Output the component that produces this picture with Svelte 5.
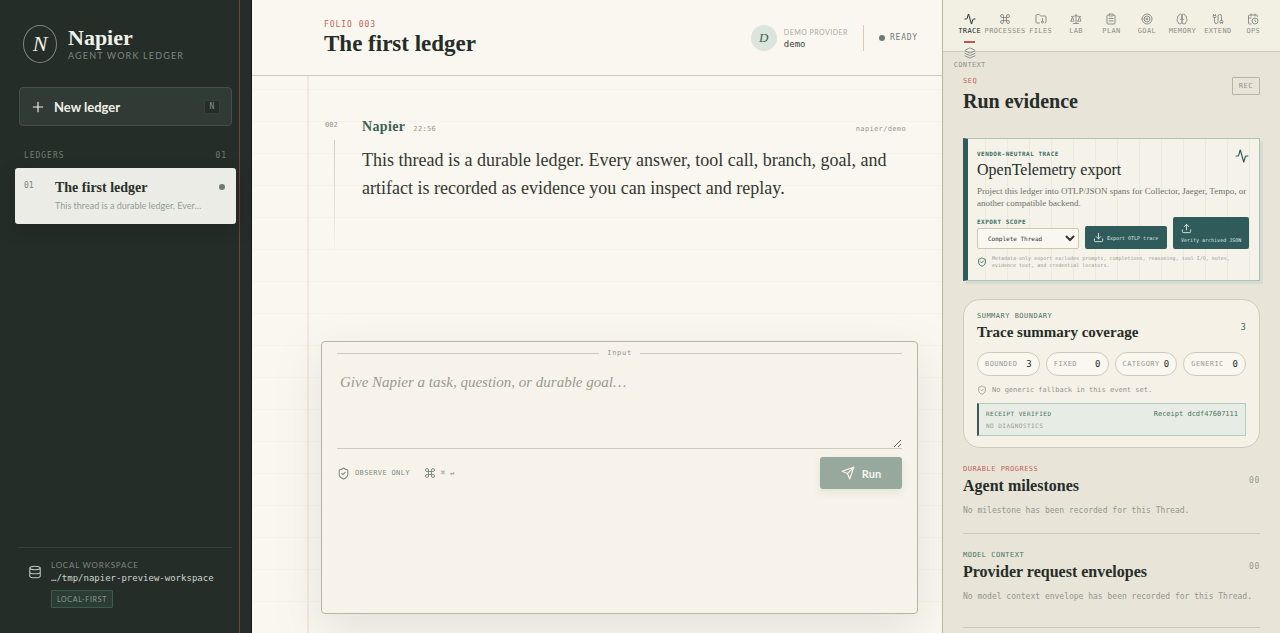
<script>
    const icons = {
        activity: 'M22 12h-2.48a2 2 0 0 0-1.93 1.46l-2.35 8.36a.25.25 0 0 1-.48 0L9.24 2.18a.25.25 0 0 0-.48 0l-2.35 8.36A2 2 0 0 1 4.49 12H2',
        command: 'M15 6v12a3 3 0 1 0 3-3H6a3 3 0 1 0 3 3V6a3 3 0 1 0-3 3h12a3 3 0 1 0-3-3',
        folder: 'M9 20H4a2 2 0 0 1-2-2V5a2 2 0 0 1 2-2h3.9a2 2 0 0 1 1.69.9l.81 1.2a2 2 0 0 0 1.67.9H20a2 2 0 0 1 2 2v10a2 2 0 0 1-2 2M15 11v5M13 18a2 2 0 1 0 4 0a2 2 0 1 0-4 0',
        scale: 'm16 16 3-8 3 8c-.87.65-1.92 1-3 1s-2.13-.35-3-1ZM2 16l3-8 3 8c-.87.65-1.92 1-3 1s-2.13-.35-3-1ZM7 21h10M12 3v18M3 7h2c2 0 5-1 7-2 2 1 5 2 7 2h2',
        clipboard: 'M9 2h6a1 1 0 0 1 1 1v2a1 1 0 0 1-1 1H9a1 1 0 0 1-1-1V3a1 1 0 0 1 1-1ZM16 4h2a2 2 0 0 1 2 2v14a2 2 0 0 1-2 2H6a2 2 0 0 1-2-2V6a2 2 0 0 1 2-2h2M8 11h8M8 16h8',
        target: 'M2 12a10 10 0 1 0 20 0a10 10 0 1 0-20 0M6 12a6 6 0 1 0 12 0a6 6 0 1 0-12 0M10 12a2 2 0 1 0 4 0a2 2 0 1 0-4 0',
        brain: 'M12 5a3 3 0 1 0-5.997.125 4 4 0 0 0-2.526 5.77 4 4 0 0 0 .556 6.588A4 4 0 1 0 12 18ZM12 5a3 3 0 1 1 5.997.125 4 4 0 0 1 2.526 5.77 4 4 0 0 1-.556 6.588A4 4 0 1 1 12 18ZM15 13a4.5 4.5 0 0 1-3-4 4.5 4.5 0 0 1-3 4',
        cable: 'M17 21v-2a1 1 0 0 1-1-1v-1a2 2 0 0 1 2-2h2a2 2 0 0 1 2 2v1a1 1 0 0 1-1 1v2M19 15V6.5a1 1 0 0 0-7 0v11a1 1 0 0 1-7 0V9M21 19h-4M3 5h4V3M7 5a1 1 0 0 1 1 1v1a2 2 0 0 1-2 2H4a2 2 0 0 1-2-2V6a1 1 0 0 1 1-1V3',
        calendar: 'M21 7.5V6a2 2 0 0 0-2-2H5a2 2 0 0 0-2 2v14a2 2 0 0 0 2 2h3.5M16 2v4M8 2v4M3 10h5M17.5 17.5 16 16.3V14M10 16a6 6 0 1 0 12 0a6 6 0 1 0-12 0',
        layers: 'M12.83 2.18a2 2 0 0 0-1.66 0L2.6 6.08a1 1 0 0 0 0 1.83l8.58 3.91a2 2 0 0 0 1.66 0l8.58-3.9a1 1 0 0 0 0-1.83ZM22 12.65l-9.17 4.16a2 2 0 0 1-1.66 0L2 12.65M22 17.65l-9.17 4.16a2 2 0 0 1-1.66 0L2 17.65',
        shield: 'M20 13c0 5-3.5 7.5-7.66 8.95a1 1 0 0 1-.67-.01C7.5 20.5 4 18 4 13V6a1 1 0 0 1 1-1c2 0 4.5-1.2 6.24-2.72a1.17 1.17 0 0 1 1.52 0C14.51 3.81 17 5 19 5a1 1 0 0 1 1 1ZM9 12l2 2 4-4',
        send: 'm22 2-7 20-4-9-9-4ZM22 2 11 13',
        database: 'M3 5a9 3 0 1 0 18 0a9 3 0 1 0-18 0M3 5v14a9 3 0 0 0 18 0V5M3 12a9 3 0 0 0 18 0',
        download: 'M21 15v4a2 2 0 0 1-2 2H5a2 2 0 0 1-2-2v-4M7 10l5 5 5-5M12 15V3',
        upload: 'M21 15v4a2 2 0 0 1-2 2H5a2 2 0 0 1-2-2v-4M17 8l-5-5-5 5M12 3v12',
        plus: 'M4 12h16M12 4v16'
    };

    const tabs = [
        ['Trace', 'activity'],
        ['Processes', 'command'],
        ['Files', 'folder'],
        ['Lab', 'scale'],
        ['Plan', 'clipboard'],
        ['Goal', 'target'],
        ['Memory', 'brain'],
        ['Extend', 'cable'],
        ['Ops', 'calendar'],
        ['Context', 'layers']
    ];

    const counts = [
        ['Bounded', 3],
        ['Fixed', 0],
        ['Category', 0],
        ['Generic', 0]
    ];

    const empties = [
        { kicker: 'Durable progress', title: 'Agent milestones', text: 'No milestone has been recorded for this Thread.', warm: true },
        { kicker: 'Model context', title: 'Provider request envelopes', text: 'No model context envelope has been recorded for this Thread.', warm: false }
    ];

    let current = $state('Trace');
    let task = $state('');
</script>

{#snippet icon(name, size, weight = 2)}
    <svg width={size} height={size} viewBox="0 0 24 24" fill="none" stroke="currentColor" stroke-width={weight} stroke-linecap="round" stroke-linejoin="round" aria-hidden="true">
        <path d={icons[name]} />
    </svg>
{/snippet}

<div class="shell">
    <nav class="sidebar">
        <div class="brand">
            <span class="mark">N</span>
            <div class="brand-text">
                <div class="brand-name">Napier</div>
                <div class="brand-sub">AGENT WORK LEDGER</div>
            </div>
        </div>
        <button class="new-ledger">
            {@render icon('plus', 14, 2)}
            <span>New ledger</span>
            <kbd>N</kbd>
        </button>
        <div class="list-head mono"><span>LEDGERS</span><span>01</span></div>
        <button class="ledger">
            <span class="num mono">01</span>
            <span class="ledger-text">
                <strong>The first ledger</strong>
                <small>This thread is a durable ledger. Ever…</small>
            </span>
            <i class="dot"></i>
        </button>
        <div class="workspace">
            {@render icon('database', 14, 1.8)}
            <div>
                <div class="ws-label">LOCAL WORKSPACE</div>
                <div class="ws-path mono">…/tmp/napier-preview-workspace</div>
                <span class="badge">LOCAL-FIRST</span>
            </div>
        </div>
    </nav>

    <main>
        <header>
            <div class="title">
                <div class="folio mono">FOLIO 003</div>
                <h1>The first ledger</h1>
            </div>
            <div class="status">
                <span class="avatar">D</span>
                <div class="provider">
                    <div class="provider-label">DEMO PROVIDER</div>
                    <div class="provider-name mono">demo</div>
                </div>
                <div class="ready mono"><i class="dot"></i>READY</div>
            </div>
        </header>

        <div class="paper">
            <article>
                <div class="rail mono">002</div>
                <div class="message">
                    <div class="meta">
                        <strong>Napier</strong>
                        <time class="mono">22:56</time>
                        <span class="model mono">napier/demo</span>
                    </div>
                    <p>This thread is a durable ledger. Every answer, tool call, branch, goal, and artifact is recorded as evidence you can inspect and replay.</p>
                </div>
            </article>

            <form class="composer" onsubmit={(e) => e.preventDefault()}>
                <label class="rule mono" for="task">Input</label>
                <textarea id="task" bind:value={task} placeholder="Give Napier a task, question, or durable goal…"></textarea>
                <div class="composer-foot">
                    <span class="hint mono">{@render icon('shield', 13, 2)}OBSERVE ONLY</span>
                    <span class="hint mono">{@render icon('command', 12, 2)}⌘ ↵</span>
                    <button class="run" disabled={!task}>{@render icon('send', 14, 2)}Run</button>
                </div>
            </form>
        </div>
    </main>

    <aside>
        <nav class="tabs">
            {#each tabs as [name, glyph]}
                <button class="tab mono" class:active={current === name} onclick={() => (current = name)}>
                    {@render icon(glyph, 12)}
                    <span>{name}</span>
                </button>
            {/each}
        </nav>

        <div class="evidence">
            <div class="evidence-head">
                <div>
                    <div class="kicker mono warm">SEQ</div>
                    <h2>Run evidence</h2>
                </div>
                <span class="rec mono">REC</span>
            </div>

            <section class="export">
                <div class="export-top">
                    <div class="tiny mono">VENDOR-NEUTRAL TRACE</div>
                    {@render icon('activity', 14)}
                </div>
                <h3>OpenTelemetry export</h3>
                <p>Project this ledger into OTLP/JSON spans for Collector, Jaeger, Tempo, or another compatible backend.</p>
                <div class="export-row">
                    <div class="scope">
                        <label class="tiny mono" for="scope">EXPORT SCOPE</label>
                        <select id="scope" class="mono">
                            <option>Complete Thread</option>
                        </select>
                    </div>
                    <button class="solid mono">{@render icon('download', 11)}Export OTLP trace</button>
                    <button class="solid tall mono">{@render icon('upload', 11)}Verify archived JSON</button>
                </div>
                <div class="note mono">
                    {@render icon('shield', 10)}
                    <span>Metadata-only export excludes prompts, completions, reasoning, tool I/O, notes, evidence text, and credential locators.</span>
                </div>
            </section>

            <section class="coverage">
                <div class="section-head">
                    <div>
                        <div class="kicker mono">SUMMARY BOUNDARY</div>
                        <h3>Trace summary coverage</h3>
                    </div>
                    <span class="total mono">3</span>
                </div>
                <div class="pills">
                    {#each counts as [label, n]}
                        <div class="pill mono"><span>{label}</span><b>{n}</b></div>
                    {/each}
                </div>
                <div class="fallback mono">{@render icon('shield', 10)}No generic fallback in this event set.</div>
                <div class="receipt mono">
                    <div><span class="verified">RECEIPT VERIFIED</span><span class="hash">Receipt dcdf47607111</span></div>
                    <div>NO DIAGNOSTICS</div>
                </div>
            </section>

            {#each empties as item}
                <section class="empty">
                    <div class="section-head">
                        <div>
                            <div class="kicker mono" class:warm={item.warm}>{item.kicker}</div>
                            <h3>{item.title}</h3>
                        </div>
                        <span class="count mono">00</span>
                    </div>
                    <p class="mono">{item.text}</p>
                </section>
            {/each}
        </div>
    </aside>
</div>

<style>
    :global(body) {
        margin: 0;
        background: #faf7f0;
    }

    .shell {
        --serif: "Liberation Serif", serif;
        --sans: Lato, sans-serif;
        display: grid;
        grid-template-columns: 252px minmax(0, 1fr) 338px;
        grid-template-rows: minmax(0, 1fr);
        height: 100vh;
        overflow: hidden;
        font-family: var(--sans);
        color: #252d28;
    }

    .shell * {
        box-sizing: border-box;
    }

    .mono {
        font-family: "DejaVu Sans Mono", monospace;
    }

    button {
        font-family: var(--sans);
        border: 0;
        padding: 0;
        background: none;
        color: inherit;
        cursor: pointer;
    }

    h1, h2, h3, p {
        margin: 0;
        font-family: var(--serif);
    }

    svg {
        display: block;
        flex: none;
    }

    .dot {
        flex: none;
        width: 6px;
        height: 6px;
        border-radius: 50%;
        background: #6c7c73;
    }

    /* sidebar */
    .sidebar {
        display: flex;
        flex-direction: column;
        padding: 25px 19px;
        border-right: 1px solid #101a1c;
        background: linear-gradient(90deg, transparent 239px, #74403a 239px, #74403a 240px, transparent 240px), #252d28;
    }

    .brand {
        display: flex;
        align-items: center;
        gap: 11px;
        padding-left: 4px;
    }

    .brand-text {
        padding-top: 2px;
    }

    .mark {
        width: 34px;
        height: 38px;
        border: 1px solid #7d857e;
        border-radius: 50%;
        color: #f2efe4;
        font: italic 22px/36px var(--serif);
        text-align: center;
    }

    .brand-name {
        font: bold 22px/22px var(--serif);
        color: #f0f1e9;
    }

    .brand-sub {
        font-size: 9px;
        line-height: 14px;
        letter-spacing: 0.13em;
        color: #7c8780;
    }

    .new-ledger {
        display: flex;
        align-items: center;
        gap: 9px;
        height: 39px;
        margin-top: 24px;
        padding: 0 11px;
        border: 1px solid #435049;
        border-radius: 4px;
        background: #313b35;
        color: #f2f1e8;
        font-size: 13px;
        font-weight: bold;
    }

    kbd {
        margin-left: auto;
        width: 16px;
        border: 1px solid #38423c;
        border-radius: 3px;
        background: #252d28;
        color: #88918a;
        font: 8px/12px "DejaVu Sans Mono", monospace;
        text-align: center;
    }

    .list-head {
        display: flex;
        justify-content: space-between;
        margin: 24px 0 7px;
        padding: 0 5px;
        font-size: 8px;
        line-height: 11px;
        letter-spacing: 0.12em;
        color: #717c75;
    }

    .ledger {
        display: flex;
        gap: 8px;
        height: 56px;
        margin: 0 -4px;
        padding: 11px 11px 0 9px;
        border-radius: 3px;
        background: #eaece5;
        box-shadow: 0 6px 14px #1c242099;
        text-align: left;
    }

    .num {
        width: 23px;
        font-size: 8px;
        line-height: 13px;
        color: #7d857e;
    }

    .ledger-text {
        flex: 1;
        min-width: 0;
    }

    .ledger strong {
        display: block;
        font: bold 14px/18px var(--serif);
        color: #2a302b;
    }

    .ledger small {
        display: block;
        font-size: 9px;
        line-height: 18px;
        color: #959d96;
        white-space: nowrap;
    }

    .ledger .dot {
        margin-top: 5px;
    }

    .workspace {
        display: flex;
        gap: 9px;
        margin-top: auto;
        padding: 11px 9px 0;
        border-top: 1px solid #38423c;
        color: #c0c8c1;
    }

    .workspace svg {
        margin-top: 6px;
    }

    .ws-label {
        font-size: 8px;
        line-height: 13px;
        letter-spacing: 0.1em;
        color: #7c8780;
    }

    .ws-path {
        font-size: 9px;
        line-height: 13px;
        color: #cfd5cf;
    }

    .badge {
        display: inline-block;
        margin-top: 5px;
        padding: 0 5px;
        border: 1px solid #3d5a4f;
        border-radius: 1px;
        background: #2b3c35;
        font-size: 7px;
        line-height: 16px;
        letter-spacing: 0.1em;
        color: #86988e;
    }

    /* ledger page */
    main {
        display: flex;
        flex-direction: column;
        min-width: 0;
        background: #faf7f0;
    }

    header {
        display: flex;
        flex: none;
        align-items: center;
        justify-content: space-between;
        height: 76px;
        padding: 0 24px 0 72px;
        border-bottom: 1px solid #d2cbbb;
    }

    .title {
        padding-top: 2px;
    }

    .folio {
        font-size: 8px;
        line-height: 11px;
        letter-spacing: 0.12em;
        color: #c4645a;
    }

    h1 {
        font-size: 23px;
        line-height: 28px;
    }

    .status {
        display: flex;
        align-items: center;
        gap: 7px;
    }

    .avatar {
        width: 26px;
        height: 26px;
        border-radius: 50%;
        background: #dce5dc;
        color: #3d6355;
        font: italic 13px/26px var(--serif);
        text-align: center;
    }

    .provider {
        padding-top: 2px;
    }

    .provider-label {
        font-size: 7px;
        line-height: 11px;
        letter-spacing: 0.07em;
        color: #a8aca3;
    }

    .provider-name {
        font-size: 9px;
        line-height: 12px;
        color: #3b433d;
    }

    .ready {
        display: flex;
        align-items: center;
        gap: 5px;
        margin-left: 8px;
        padding-left: 15px;
        border-left: 1px solid #d6ccb5;
        font-size: 8px;
        line-height: 26px;
        letter-spacing: 0.1em;
        color: #727a72;
    }

    .paper {
        display: flex;
        flex: 1;
        flex-direction: column;
        justify-content: space-between;
        min-height: 0;
        padding: 39px 24px 19px 69px;
        background:
            linear-gradient(90deg, transparent 55px, #f0e8dc 55px, #f0e8dc 57px, transparent 57px),
            repeating-linear-gradient(transparent 0 13px, #f6f2e7 13px 14px, transparent 14px 32px);
    }

    article {
        display: flex;
        padding-right: 12px;
    }

    .rail {
        width: 41px;
        padding: 5px 0 0 4px;
        font-size: 7px;
        line-height: 10px;
        color: #92978e;
    }

    .rail::after {
        content: "";
        display: block;
        width: 1px;
        height: 110px;
        margin: 10px 0 0 9px;
        background: linear-gradient(#d3ccbc, #f5f1e6);
    }

    .message {
        flex: 1;
    }

    .meta {
        display: flex;
        align-items: baseline;
        gap: 8px;
        margin-bottom: 5px;
        font-size: 7px;
        line-height: 24px;
        letter-spacing: 0.05em;
        color: #92978e;
    }

    .meta strong {
        font: bold 14px/24px var(--serif);
        color: #3a6153;
    }

    .model {
        margin-left: auto;
    }

    .message p {
        font-size: 18px;
        line-height: 28px;
        color: #343831;
    }

    .composer {
        display: flex;
        flex: none;
        flex-direction: column;
        height: 273px;
        padding: 6px 15px;
        border: 1px solid #b5b5a4;
        border-radius: 4px;
        background: #f7f3ea;
        box-shadow: 0 16px 48px #6f74642b;
    }

    .rule {
        display: flex;
        align-items: center;
        gap: 8px;
        font-size: 7px;
        line-height: 11px;
        letter-spacing: 0.1em;
        color: #92978e;
    }

    .rule::before,
    .rule::after {
        content: "";
        flex: 1;
        height: 1px;
        background: #d0cabc;
    }

    textarea {
        display: block;
        width: 100%;
        height: 89px;
        margin-top: 1px;
        padding: 10px 3px;
        border: 0;
        border-bottom: 1px solid #d0cabc;
        outline: 0;
        background: none;
        color: #343831;
        font: 15px/25px var(--serif);
        resize: vertical;
    }

    textarea::placeholder {
        color: #979b90;
        font-style: italic;
    }

    .composer-foot {
        display: flex;
        align-items: center;
        gap: 14px;
        margin-top: 8px;
    }

    .hint {
        display: flex;
        align-items: center;
        gap: 5px;
        font-size: 7px;
        letter-spacing: 0.05em;
        color: #858c83;
    }

    .run {
        display: flex;
        align-items: center;
        justify-content: center;
        gap: 7px;
        width: 82px;
        height: 32px;
        margin-left: auto;
        border-radius: 3px;
        background: #97a99c;
        box-shadow: 0 3px 8px #55695c1f;
        color: #f8f6ee;
        font-size: 11px;
        font-weight: bold;
    }

    /* evidence column */
    aside {
        display: flex;
        flex-direction: column;
        min-width: 0;
        border-left: 1px solid #b9b3a2;
        background: #e8e4d8;
    }

    .tabs {
        display: grid;
        grid-template-columns: repeat(9, minmax(0, 1fr));
        grid-auto-rows: 34px;
        flex: none;
        height: 52px;
        padding: 9px 9px 0;
        border-bottom: 1px solid #d2c9ba;
        background: #f2efe3;
    }

    .tab {
        display: flex;
        flex-direction: column;
        align-items: center;
        padding-top: 4px;
        font-family: "DejaVu Sans Mono", monospace;
        font-size: 7px;
        line-height: 12px;
        letter-spacing: 0.05em;
        text-transform: uppercase;
        color: #8c9188;
    }

    .active {
        color: #252d28;
    }

    .active::after {
        content: "";
        width: 11px;
        height: 2px;
        margin-top: 4px;
        background: #b9584c;
    }

    .evidence {
        flex: 1;
        min-height: 0;
        padding: 24px 20px;
        overflow: hidden;
    }

    .evidence-head {
        display: flex;
        align-items: flex-start;
        justify-content: space-between;
        margin-bottom: 24px;
    }

    .kicker {
        font-size: 7px;
        line-height: 11px;
        letter-spacing: 0.07em;
        text-transform: uppercase;
        color: #4b7264;
    }

    .warm {
        color: #c4645a;
    }

    h2 {
        margin-top: 2px;
        font-size: 20px;
        line-height: 25px;
    }

    .rec {
        margin-top: 1px;
        padding: 0 6px;
        border: 1px solid #b9b3a2;
        border-radius: 1px;
        font-size: 7px;
        line-height: 16px;
        letter-spacing: 0.08em;
        color: #92978e;
    }

    .export {
        padding: 10px 10px 11px 9px;
        border: 1px solid #a5c4b9;
        border-left: 5px solid #2f5c5a;
        background: repeating-linear-gradient(90deg, transparent 0 17px, #e9eae1 17px 18px, transparent 18px 22px), #f4f2e9;
        box-shadow: 3px 3px 0 #dadbcf;
    }

    .export-top {
        display: flex;
        justify-content: space-between;
        height: 9px;
        color: #2f5c5a;
    }

    .tiny {
        font-size: 6px;
        line-height: 9px;
        font-weight: bold;
        letter-spacing: 0.08em;
        color: #3c6d62;
    }

    h3 {
        font-size: 15px;
        line-height: 21px;
    }

    .export h3 {
        margin-top: 1px;
        font-size: 16px;
        line-height: 22px;
        font-weight: normal;
    }

    .export p {
        margin-top: 4px;
        font-size: 9px;
        line-height: 12px;
        color: #6c736b;
    }

    .export-row {
        display: grid;
        grid-template-columns: 102px 82px 76px;
        align-items: end;
        gap: 6px;
        margin-top: 8px;
    }

    .scope {
        display: grid;
        gap: 2px;
    }

    select {
        height: 21px;
        padding: 0 0 0 6px;
        border: 1px solid #cfc7b1;
        border-radius: 2px;
        background: #faf7f0;
        color: #343831;
        font-size: 6px;
    }

    .solid {
        display: flex;
        align-items: center;
        gap: 3px;
        height: 23px;
        padding: 0 8px;
        border-radius: 2px;
        background: #2f5c5a;
        color: #dfe8e2;
        font-family: "DejaVu Sans Mono", monospace;
        font-size: 5px;
        white-space: nowrap;
    }

    .tall {
        flex-direction: column;
        align-items: flex-start;
        justify-content: center;
        height: 32px;
    }

    .note {
        display: flex;
        align-items: center;
        gap: 5px;
        margin-top: 6px;
        font-size: 5px;
        line-height: 7px;
        color: #979c92;
    }

    .note svg {
        color: #2f5c5a;
    }

    .coverage {
        margin-top: 18px;
        padding: 11px 13px;
        border: 1px solid #cfcabb;
        border-radius: 17px;
        background: #f6f1e6;
    }

    .section-head {
        display: flex;
        align-items: center;
        justify-content: space-between;
    }

    .total {
        font-size: 9px;
        color: #3c6d62;
    }

    .pills {
        display: grid;
        grid-template-columns: repeat(4, minmax(0, 1fr));
        gap: 6px;
        margin-top: 9px;
    }

    .pill {
        display: flex;
        align-items: center;
        justify-content: space-between;
        height: 24px;
        padding: 0 7px;
        border: 1px solid #cfcabb;
        border-radius: 12px;
        background: #faf7f0;
        font-size: 7px;
        letter-spacing: 0.06em;
        text-transform: uppercase;
        color: #979c92;
    }

    .pill b {
        font-size: 9px;
        font-weight: normal;
        letter-spacing: 0;
        color: #252d28;
    }

    .fallback {
        display: flex;
        align-items: center;
        gap: 5px;
        margin-top: 8px;
        font-size: 7px;
        line-height: 12px;
        color: #92978e;
    }

    .receipt {
        margin-top: 7px;
        padding: 4px 7px 3px;
        border: 1px solid #b1cdc3;
        border-left: 2px solid #3f5a52;
        background: #e7ece4;
        font-size: 6px;
        line-height: 12px;
        letter-spacing: 0.08em;
        color: #979c92;
    }

    .receipt div {
        display: flex;
        justify-content: space-between;
    }

    .verified {
        color: #4b7264;
    }

    .hash {
        font-size: 7px;
        letter-spacing: 0;
        color: #4b7264;
    }

    .empty {
        padding: 16px 0;
        border-bottom: 1px solid #cfcabb;
    }

    .empty:last-child {
        padding-bottom: 24px;
    }

    .empty h3 {
        font-size: 16px;
        line-height: 22px;
    }

    .count {
        font-size: 8px;
        letter-spacing: 0.08em;
        color: #979c92;
    }

    .empty p {
        margin-top: 8px;
        font-family: "DejaVu Sans Mono", monospace;
        font-size: 8px;
        line-height: 12px;
        color: #92978e;
    }
</style>
